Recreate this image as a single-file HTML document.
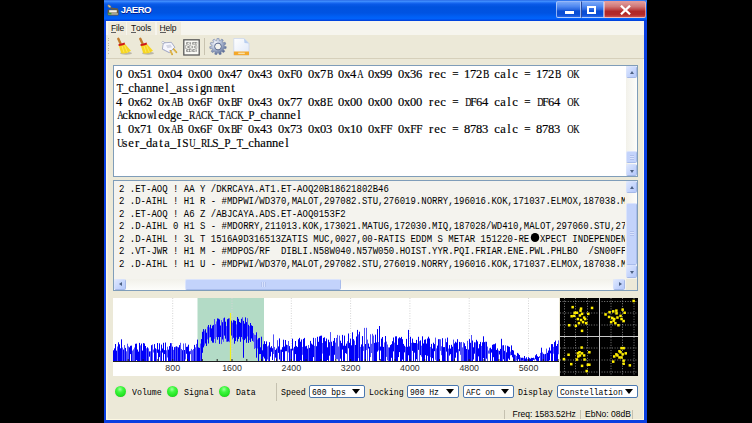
<!DOCTYPE html>
<html><head><meta charset="utf-8">
<style>
*{margin:0;padding:0;box-sizing:border-box}
html,body{width:752px;height:423px;overflow:hidden;background:#000}
body{position:relative;font-family:"Liberation Sans",sans-serif}
.a{position:absolute}
#win{left:104px;top:0;width:543px;height:423px;background:#0a3fe0;}
#title{left:0;top:0;width:543px;height:21px;
 background:linear-gradient(to bottom,#1a56dd 0,#4a98ff 1px,#2d7cfa 2px,#0a5ae8 4px,#0052de 7px,#0053e2 13px,#0060f6 17px,#0062fb 19px,#0046e4 20px,#0042da 21px);}
#client{left:2px;top:21px;width:538px;height:399px;background:#ece9d8;box-shadow:inset 1.5px 0 0 #fcf8e4,inset -1px 0 0 #fcf8e4,inset 0 -1px 0 #fcf8e4}
#ttl{left:16.8px;top:4px;color:#fff;font-weight:bold;font-size:9.6px;letter-spacing:-0.6px;text-shadow:0.5px 0.5px 0 #0a1f8a}
.tb{top:1px;height:17px;border:1px solid rgba(200,220,255,0.7);border-radius:2px;}
#menubar{left:0;top:0;width:538px;height:14px;background:#f6f5ee}
.mi{top:0.5px;height:13px;background:#efebdd;font-size:8.5px;color:#111;line-height:13px;padding-left:3px;letter-spacing:-0.15px}
.mi u{text-decoration:none;border-bottom:1px solid #606060;line-height:8px;display:inline-block}
#toolbar{left:0;top:14px;width:538px;height:24px;background:#ece9d8;border-bottom:1px solid #d6d0bb}
.box{border:1px solid #7f9db9;background:#fff;overflow:hidden}
.sg{font-family:"Liberation Serif",serif;white-space:pre;color:#000;-webkit-text-stroke:0.18px #000}
.sg i{font-style:normal;display:inline-block;width:6px;text-align:center}
.sg2 i{width:5.4px}
.sg b{font-weight:normal;display:inline-block;transform-origin:50% 50%}
.mono{font-family:"Liberation Mono",monospace;white-space:pre;color:#000;transform-origin:0 0}
.sbv{background:linear-gradient(to right,#f2f1ea,#fdfdfb)}
.sbtn{background:linear-gradient(135deg,#dce6fe,#b4c8fa);border:1px solid rgba(255,255,255,0.4);border-right-color:#a4b8e8;border-bottom-color:#a4b8e8;border-radius:2px}
.thumb{background:#c3d3fb;border:1px solid rgba(255,255,255,0.4);border-right-color:#a8bcec;border-bottom-color:#a8bcec;border-radius:2px}
.grip{position:absolute;background:repeating-linear-gradient(to bottom,#b0c0ec 0,#b0c0ec 1px,#d8e2fd 1px,#d8e2fd 2px)}
.griph{position:absolute;background:repeating-linear-gradient(to right,#b4c4ee 0,#b4c4ee 1px,#d8e2fd 1px,#d8e2fd 2px)}
.led{width:11.5px;height:11.5px;border-radius:50%;background:radial-gradient(circle at 45% 30%,#a0ffa0 0,#40f840 30%,#20e020 70%,#10a810 92%,#2a8a2a 100%);box-shadow:0 0 1px 0.5px rgba(255,190,220,0.6)}
.lbl{font-family:"Liberation Mono",monospace;font-size:9.6px;color:#000;white-space:pre;transform-origin:0 0;transform:scaleX(0.86)}
.combo{height:13px;border:1px solid #4a78b0;background:#fff;border-radius:2px}
.ctext{font-family:"Liberation Mono",monospace;font-size:9.2px;color:#000;white-space:pre;transform-origin:0 0;transform:scaleX(0.875);left:1.5px;top:1px;line-height:12px}
.arr{width:0;height:0;border-left:4.5px solid transparent;border-right:4.5px solid transparent;border-top:5px solid #000}
.st{font-size:8.5px;color:#000;white-space:pre}
.sep{width:1px;background:#c5c1b0}
</style></head><body>
<div id="win" class="a">
 <div id="title" class="a">
  <svg class="a" style="left:2.5px;top:4px" width="14" height="13" viewBox="0 0 14 13">
   <ellipse cx="2.4" cy="2.3" rx="1.9" ry="1.1" transform="rotate(40 2.4 2.3)" fill="#dccca0" stroke="#7a6840" stroke-width="0.5"/>
   <path d="M3.8 4.2 L11 5.2" stroke="#6a5a3a" stroke-width="1.4"/>
   <rect x="0.6" y="5.6" width="11" height="5.8" rx="1.2" fill="#6a5a38"/>
   <rect x="2.2" y="6.2" width="7.6" height="2.3" fill="#f0f0ea"/>
   <rect x="1.3" y="8.9" width="9.6" height="2" fill="#a4a494"/>
   <rect x="1.3" y="8.9" width="3.1" height="1.5" fill="#3c9c30"/>
  </svg>
  <div id="ttl" class="a">JAERO</div>
  <div class="a tb" style="left:452px;width:25px;border-radius:2px 0 0 2px;background:linear-gradient(to bottom,#7aa8f8 0,#4f88f0 30%,#2a68e0 50%,#0a4ed4 60%,#0a50d8 85%,#2a68e8 100%)">
   <div class="a" style="left:7.5px;top:8.5px;width:9.5px;height:3px;background:#fff"></div>
  </div>
  <div class="a tb" style="left:477px;width:23px;border-radius:0;border-left-color:#2a4aa0;background:linear-gradient(to bottom,#7aa8f8 0,#4f88f0 30%,#2a68e0 50%,#0a4ed4 60%,#0a50d8 85%,#2a68e8 100%)">
   <div class="a" style="left:5px;top:3.5px;width:9px;height:8.5px;border:2px solid #fff;border-top-width:2.5px"></div>
  </div>
  <div class="a tb" style="left:500px;width:42px;border-radius:0 2px 2px 0;border-left-color:#5a3a8a;border-color:rgba(255,220,220,0.55);background:linear-gradient(to bottom,#e09a9a 0,#d07878 30%,#c04848 50%,#b02828 62%,#b42a2a 85%,#c85050 100%)">
   <svg class="a" style="left:14.5px;top:3px" width="11" height="10" viewBox="0 0 11 10"><path d="M1.8 1.5 L9.2 8.5 M9.2 1.5 L1.8 8.5" stroke="#fff" stroke-width="2.3" stroke-linecap="square"/></svg>
  </div>
 </div>
 <div id="client" class="a">
  <div id="menubar" class="a">
   <div class="a mi" style="left:2px;width:18px"><u>F</u>ile</div>
   <div class="a mi" style="left:21px;width:28px;padding-left:4px"><u>T</u>ools</div>
   <div class="a mi" style="left:50.5px;width:24px"><u>H</u>elp</div>
  </div>
  <div id="toolbar" class="a">
   <!-- handle -->
   <div class="a" style="left:2px;top:3px;width:1px;height:16px;background:repeating-linear-gradient(to bottom,#b8b3a0 0,#b8b3a0 1px,transparent 1px,transparent 2.5px)"></div>
      <svg class="a" style="left:10px;top:2px" width="17" height="18" viewBox="0 0 17 18">
    <ellipse cx="10" cy="16.3" rx="6" ry="1.5" fill="#a8a498" opacity="0.75"/>
    <path d="M2.3 1.8 L4.6 6.8" stroke="#c27a2a" stroke-width="2.4" stroke-linecap="round"/>
    <path d="M2.6 8 L8.6 6.5 L15 13.8 Q11 17.2 5.2 16.3 Z" fill="#f6d622"/>
    <path d="M6 9 L8 15.5 M8.5 8.5 L11.5 15.5" stroke="#fff080" stroke-width="0.8" opacity="0.8"/>
    <path d="M2.4 7.2 Q5.5 6.6 8.6 5.6 L9 7.4 Q6 8.4 2.8 9 Z" fill="#d01818"/>
   </svg>
   <svg class="a" style="left:32px;top:2px" width="17" height="18" viewBox="0 0 17 18">
    <ellipse cx="10" cy="16.3" rx="6" ry="1.5" fill="#a8a498" opacity="0.75"/>
    <path d="M2.3 1.8 L4.6 6.8" stroke="#c27a2a" stroke-width="2.4" stroke-linecap="round"/>
    <path d="M2.6 8 L8.6 6.5 L15 13.8 Q11 17.2 5.2 16.3 Z" fill="#f6d622"/>
    <path d="M6 9 L8 15.5 M8.5 8.5 L11.5 15.5" stroke="#fff080" stroke-width="0.8" opacity="0.8"/>
    <path d="M2.4 7.2 Q5.5 6.6 8.6 5.6 L9 7.4 Q6 8.4 2.8 9 Z" fill="#d01818"/>
   </svg>
   <svg class="a" style="left:55px;top:4.5px" width="18" height="17" viewBox="0 0 18 17">
    <path d="M0.9 2 L4 3.4" stroke="#9098b0" stroke-width="2"/>
    <path d="M0.9 2 L4 3.4" stroke="#fafaff" stroke-width="1.1"/>
    <path d="M2 4.8 L3.4 2.8 L10.3 2.3 L13.8 7.2 L8.3 12.7 L1.4 9.2 Z" fill="#f6f6fe" stroke="#8a92b4" stroke-width="0.7"/>
    <path d="M1.6 8.8 L8.3 12.2 L13.3 7.4 L13.8 7.2 L8.3 12.7 L1.4 9.2 Z" fill="#a8acc8"/>
    <path d="M5 5.2 L9.5 4.6 L11 7.2 L6.5 8.2 Z" fill="#d4d6e4"/>
    <path d="M9.4 10.8 L11.2 14.3 M12.8 9.2 L15.4 12.3" stroke="#d0a028" stroke-width="1.7" stroke-linecap="round"/>
    <path d="M9.4 10.8 L11.2 14.3 M12.8 9.2 L15.4 12.3" stroke="#f4d070" stroke-width="0.6"/>
   </svg>
   <svg class="a" style="left:77px;top:3.5px" width="17" height="17" viewBox="0 0 17 17">
    <rect x="0.8" y="0.8" width="15.4" height="15.2" fill="#fbfbf6" stroke="#5a5a5a" stroke-width="1.3"/>
    <g fill="#505050" opacity="0.8"><rect x="3.10" y="3.20" width="0.7" height="2.4"/><rect x="4.65" y="3.20" width="1.5" height="2.4" fill="none" stroke="#505050" stroke-width="0.45"/><rect x="7.00" y="3.20" width="0.7" height="2.4"/><rect x="8.95" y="3.20" width="0.7" height="2.4"/><rect x="10.50" y="3.20" width="1.5" height="2.4" fill="none" stroke="#505050" stroke-width="0.45"/><rect x="12.45" y="3.20" width="1.5" height="2.4" fill="none" stroke="#505050" stroke-width="0.45"/><rect x="2.70" y="6.80" width="1.5" height="2.4" fill="none" stroke="#505050" stroke-width="0.45"/><rect x="5.05" y="6.80" width="0.7" height="2.4"/><rect x="6.60" y="6.80" width="1.5" height="2.4" fill="none" stroke="#505050" stroke-width="0.45"/><rect x="8.95" y="6.80" width="0.7" height="2.4"/><rect x="10.90" y="6.80" width="0.7" height="2.4"/><rect x="12.45" y="6.80" width="1.5" height="2.4" fill="none" stroke="#505050" stroke-width="0.45"/><rect x="3.10" y="10.40" width="0.7" height="2.4"/><rect x="4.65" y="10.40" width="1.5" height="2.4" fill="none" stroke="#505050" stroke-width="0.45"/><rect x="6.60" y="10.40" width="1.5" height="2.4" fill="none" stroke="#505050" stroke-width="0.45"/><rect x="8.95" y="10.40" width="0.7" height="2.4"/><rect x="10.50" y="10.40" width="1.5" height="2.4" fill="none" stroke="#505050" stroke-width="0.45"/><rect x="12.85" y="10.40" width="0.7" height="2.4"/></g>
   </svg>
   <div class="a" style="left:98px;top:3px;width:1px;height:17px;background:#c8c3b0"></div>
   <svg class="a" style="left:103px;top:3px" width="18" height="17" viewBox="0 0 18 17">
    <defs><radialGradient id="gg" cx="35%" cy="30%" r="75%"><stop offset="0" stop-color="#f4f6fb"/><stop offset="0.45" stop-color="#b4c0d8"/><stop offset="1" stop-color="#53658f"/></radialGradient></defs>
    <path d="M7.57 2.67 L8.05 0.25 L9.95 0.25 L10.43 2.67 L10.95 2.83 L12.66 1.05 L14.25 2.07 L13.35 4.37 L13.71 4.78 L16.11 4.21 L16.89 5.94 L14.89 7.38 L14.97 7.92 L17.30 8.74 L17.03 10.61 L14.57 10.74 L14.34 11.24 L15.85 13.18 L14.61 14.61 L12.47 13.39 L12.01 13.69 L12.23 16.15 L10.42 16.68 L9.27 14.49 L8.73 14.49 L7.58 16.68 L5.77 16.15 L5.99 13.69 L5.53 13.39 L3.39 14.61 L2.15 13.18 L3.66 11.24 L3.43 10.74 L0.97 10.61 L0.70 8.74 L3.03 7.92 L3.11 7.38 L1.11 5.94 L1.89 4.21 L4.29 4.78 L4.65 4.37 L3.75 2.07 L5.34 1.05 L7.05 2.83 Z" fill="url(#gg)" stroke="#6878a0" stroke-width="0.5"/>
    <circle cx="9" cy="8.5" r="3.4" fill="#f2f2ee" stroke="#5a6a90" stroke-width="1"/>
   </svg>
   <svg class="a" style="left:126.5px;top:3px" width="17" height="18" viewBox="0 0 17 18">
    <defs><linearGradient id="dg" x1="0" y1="0" x2="1" y2="1"><stop offset="0" stop-color="#ffffff"/><stop offset="1" stop-color="#dfe8f8"/></linearGradient></defs>
    <path d="M0.8 0.5 L11 0.5 L16 5.5 L16 17 L0.8 17 Z" fill="url(#dg)" stroke="#c8d4ec" stroke-width="0.7"/>
    <path d="M11 0.5 L11.5 5 L16 5.5 Z" fill="#b8cef0"/>
    <rect x="0.8" y="13.5" width="15.2" height="3.7" fill="#f4a82a"/>
    <rect x="5.2" y="14.6" width="6.6" height="1.5" fill="#fbe0a8"/>
   </svg>
  </div>
  <!-- Box 1 -->
  <div class="a box" style="left:7px;top:44px;width:525px;height:112px">
   <div class="a sg" style="left:2px;top:2px;font-size:12.5px;line-height:13.75px"><i>0</i><i> </i><i>0</i><i>x</i><i>5</i><i>1</i><i> </i><i>0</i><i>x</i><i>0</i><i>4</i><i> </i><i>0</i><i>x</i><i>0</i><i>0</i><i> </i><i>0</i><i>x</i><i>4</i><i>7</i><i> </i><i>0</i><i>x</i><i>4</i><i>3</i><i> </i><i>0</i><i>x</i><i><b style="transform:scaleX(0.906)">F</b></i><i>0</i><i> </i><i>0</i><i>x</i><i>7</i><i><b style="transform:scaleX(0.756)">B</b></i><i> </i><i>0</i><i>x</i><i>4</i><i><b style="transform:scaleX(0.698)">A</b></i><i> </i><i>0</i><i>x</i><i>9</i><i>9</i><i> </i><i>0</i><i>x</i><i>3</i><i>6</i><i> </i><i>r</i><i>e</i><i>c</i><i> </i><i><b style="transform:scaleX(0.894)">=</b></i><i> </i><i>1</i><i>7</i><i>2</i><i><b style="transform:scaleX(0.756)">B</b></i><i> </i><i>c</i><i>a</i><i>l</i><i>c</i><i> </i><i><b style="transform:scaleX(0.894)">=</b></i><i> </i><i>1</i><i>7</i><i>2</i><i><b style="transform:scaleX(0.756)">B</b></i><i> </i><i><b style="transform:scaleX(0.698)">O</b></i><i><b style="transform:scaleX(0.698)">K</b></i>
<i><b style="transform:scaleX(0.825)">T</b></i><i>_</i><i>c</i><i>h</i><i>a</i><i>n</i><i>n</i><i>e</i><i>l</i><i>_</i><i>a</i><i>s</i><i>s</i><i>i</i><i>g</i><i>n</i><i><b style="transform:scaleX(0.648)">m</b></i><i>e</i><i>n</i><i>t</i>
<i>4</i><i> </i><i>0</i><i>x</i><i>6</i><i>2</i><i> </i><i>0</i><i>x</i><i><b style="transform:scaleX(0.698)">A</b></i><i><b style="transform:scaleX(0.756)">B</b></i><i> </i><i>0</i><i>x</i><i>6</i><i><b style="transform:scaleX(0.906)">F</b></i><i> </i><i>0</i><i>x</i><i><b style="transform:scaleX(0.756)">B</b></i><i><b style="transform:scaleX(0.906)">F</b></i><i> </i><i>0</i><i>x</i><i>4</i><i>3</i><i> </i><i>0</i><i>x</i><i>7</i><i>7</i><i> </i><i>0</i><i>x</i><i>8</i><i><b style="transform:scaleX(0.825)">E</b></i><i> </i><i>0</i><i>x</i><i>0</i><i>0</i><i> </i><i>0</i><i>x</i><i>0</i><i>0</i><i> </i><i>0</i><i>x</i><i>0</i><i>0</i><i> </i><i>r</i><i>e</i><i>c</i><i> </i><i><b style="transform:scaleX(0.894)">=</b></i><i> </i><i><b style="transform:scaleX(0.698)">D</b></i><i><b style="transform:scaleX(0.906)">F</b></i><i>6</i><i>4</i><i> </i><i>c</i><i>a</i><i>l</i><i>c</i><i> </i><i><b style="transform:scaleX(0.894)">=</b></i><i> </i><i><b style="transform:scaleX(0.698)">D</b></i><i><b style="transform:scaleX(0.906)">F</b></i><i>6</i><i>4</i><i> </i><i><b style="transform:scaleX(0.698)">O</b></i><i><b style="transform:scaleX(0.698)">K</b></i>
<i><b style="transform:scaleX(0.698)">A</b></i><i>c</i><i>k</i><i>n</i><i>o</i><i><b style="transform:scaleX(0.698)">w</b></i><i>l</i><i>e</i><i>d</i><i>g</i><i>e</i><i>_</i><i><b style="transform:scaleX(0.756)">R</b></i><i><b style="transform:scaleX(0.698)">A</b></i><i><b style="transform:scaleX(0.756)">C</b></i><i><b style="transform:scaleX(0.698)">K</b></i><i>_</i><i><b style="transform:scaleX(0.825)">T</b></i><i><b style="transform:scaleX(0.698)">A</b></i><i><b style="transform:scaleX(0.756)">C</b></i><i><b style="transform:scaleX(0.698)">K</b></i><i>_</i><i><b style="transform:scaleX(0.906)">P</b></i><i>_</i><i>c</i><i>h</i><i>a</i><i>n</i><i>n</i><i>e</i><i>l</i>
<i>1</i><i> </i><i>0</i><i>x</i><i>7</i><i>1</i><i> </i><i>0</i><i>x</i><i><b style="transform:scaleX(0.698)">A</b></i><i><b style="transform:scaleX(0.756)">B</b></i><i> </i><i>0</i><i>x</i><i>6</i><i><b style="transform:scaleX(0.906)">F</b></i><i> </i><i>0</i><i>x</i><i><b style="transform:scaleX(0.756)">B</b></i><i><b style="transform:scaleX(0.906)">F</b></i><i> </i><i>0</i><i>x</i><i>4</i><i>3</i><i> </i><i>0</i><i>x</i><i>7</i><i>3</i><i> </i><i>0</i><i>x</i><i>0</i><i>3</i><i> </i><i>0</i><i>x</i><i>1</i><i>0</i><i> </i><i>0</i><i>x</i><i><b style="transform:scaleX(0.906)">F</b></i><i><b style="transform:scaleX(0.906)">F</b></i><i> </i><i>0</i><i>x</i><i><b style="transform:scaleX(0.906)">F</b></i><i><b style="transform:scaleX(0.906)">F</b></i><i> </i><i>r</i><i>e</i><i>c</i><i> </i><i><b style="transform:scaleX(0.894)">=</b></i><i> </i><i>8</i><i>7</i><i>8</i><i>3</i><i> </i><i>c</i><i>a</i><i>l</i><i>c</i><i> </i><i><b style="transform:scaleX(0.894)">=</b></i><i> </i><i>8</i><i>7</i><i>8</i><i>3</i><i> </i><i><b style="transform:scaleX(0.698)">O</b></i><i><b style="transform:scaleX(0.698)">K</b></i>
<i><b style="transform:scaleX(0.698)">U</b></i><i>s</i><i>e</i><i>r</i><i>_</i><i>d</i><i>a</i><i>t</i><i>a</i><i>_</i><i>I</i><i><b style="transform:scaleX(0.906)">S</b></i><i><b style="transform:scaleX(0.698)">U</b></i><i>_</i><i><b style="transform:scaleX(0.756)">R</b></i><i><b style="transform:scaleX(0.825)">L</b></i><i><b style="transform:scaleX(0.906)">S</b></i><i>_</i><i><b style="transform:scaleX(0.906)">P</b></i><i>_</i><i><b style="transform:scaleX(0.825)">T</b></i><i>_</i><i>c</i><i>h</i><i>a</i><i>n</i><i>n</i><i>e</i><i>l</i></div>
   <div class="a sbv" style="left:512px;top:0;width:11px;height:110px"></div>
   <div class="a sbtn" style="left:512px;top:0;width:11px;height:12px"><div class="a" style="left:2.5px;top:3.5px;width:0;height:0;border-left:2.5px solid transparent;border-right:2.5px solid transparent;border-bottom:3px solid #4d6185"></div></div>
   <div class="a thumb" style="left:512px;top:85px;width:11px;height:12px"><div class="grip" style="left:2.5px;top:3px;width:4.5px;height:5px"></div></div>
   <div class="a sbtn" style="left:512px;top:98px;width:11px;height:12px"><div class="a" style="left:2.5px;top:4.5px;width:0;height:0;border-left:2.5px solid transparent;border-right:2.5px solid transparent;border-top:3px solid #4d6185"></div></div>
  </div>
  <!-- Box 2 -->
  <div class="a box" style="left:7px;top:159px;width:525px;height:111px;background:#f4f3ee">
   <div class="a" style="left:0;top:0;width:511px;height:97px;overflow:hidden">
   <div class="a mono" style="left:5px;top:1.5px;font-size:10.6px;line-height:12.5px;transform:scaleX(0.849)">2 .ET-AOQ ! AA Y /DKRCAYA.AT1.ET-AOQ20B18621802B46
2 .D-AIHL ! H1 R - #MDPWI/WD370,MALOT,297082.STU,276019.NORRY,196016.KOK,171037.ELMOX,187038.MALOT,297082
2 .ET-AOQ ! A6 Z /ABJCAYA.ADS.ET-AOQ0153F2
2 .D-AIHL 0 H1 S - #MDORRY,211013.KOK,173021.MATUG,172030.MIQ,187028/WD410,MALOT,297060.STU,276019
2 .D-AIHL ! 3L T 1516A9D316513ZATIS MUC,0027,00-RATIS EDDM S METAR 151220-RE<span style="display:inline-block;width:12.7px;height:8px;position:relative"><span style="position:absolute;left:1.5px;top:-0.5px;width:10px;height:9px;border-radius:50%;background:#000"></span></span>XPECT INDEPENDENT
2 .VT-JWR ! H1 M - #MDPOS/RF  DIBLI.N58W040.N57W050.HOIST.YYR.PQI.FRIAR.ENE.PWL.PHLBO  /SN00FF
2 .D-AIHL ! H1 U - #MDPWI/WD370,MALOT,297082.STU,276019.NORRY,196016.KOK,171037.ELMOX,187038.MALOT,297082</div>
   </div>
   <div class="a sbv" style="left:512px;top:0;width:11px;height:97px"></div>
   <div class="a sbtn" style="left:512px;top:0;width:11px;height:12px"><div class="a" style="left:2.5px;top:3.5px;width:0;height:0;border-left:2.5px solid transparent;border-right:2.5px solid transparent;border-bottom:3px solid #4d6185"></div></div>
   <div class="a thumb" style="left:512px;top:22px;width:11px;height:62px"><div class="grip" style="left:2.5px;top:27px;width:4.5px;height:5px"></div></div>
   <div class="a sbtn" style="left:512px;top:84px;width:11px;height:13px"><div class="a" style="left:2.5px;top:5px;width:0;height:0;border-left:2.5px solid transparent;border-right:2.5px solid transparent;border-top:3px solid #4d6185"></div></div>
   <div class="a" style="left:0;top:97.5px;width:511px;height:11.5px;background:linear-gradient(to bottom,#f2f1ea,#fdfdfb)"></div>
   <div class="a sbtn" style="left:0;top:97.5px;width:12px;height:11px"><div class="a" style="left:3.5px;top:2.5px;width:0;height:0;border-top:2.5px solid transparent;border-bottom:2.5px solid transparent;border-right:3px solid #4d6185"></div></div>
   <div class="a thumb" style="left:71px;top:97.5px;width:156px;height:11px"><div class="griph" style="left:75px;top:2.5px;width:5px;height:4.5px"></div></div>
   <div class="a sbtn" style="left:499px;top:97.5px;width:12px;height:11px"><div class="a" style="left:4.5px;top:2.5px;width:0;height:0;border-top:2.5px solid transparent;border-bottom:2.5px solid transparent;border-left:3px solid #4d6185"></div></div>
   <div class="a" style="left:512px;top:97.5px;width:11px;height:11.5px;background:#ece9d8"></div>
  </div>
  <!-- spectrum -->
  <svg class="a" style="left:7px;top:277px" width="446" height="78" viewBox="113 298 446 78">
   <rect x="113" y="298" width="446" height="78" fill="#fff"/>
   <rect x="197.5" y="298" width="66.5" height="63" fill="#b3dbc6"/>
   <g stroke="#d4d4d4" stroke-width="1" stroke-dasharray="1,1.5"><line x1="172.7" y1="298" x2="172.7" y2="361"/><line x1="232.0" y1="298" x2="232.0" y2="361"/><line x1="291.3" y1="298" x2="291.3" y2="361"/><line x1="350.6" y1="298" x2="350.6" y2="361"/><line x1="409.9" y1="298" x2="409.9" y2="361"/><line x1="469.2" y1="298" x2="469.2" y2="361"/><line x1="528.5" y1="298" x2="528.5" y2="361"/></g>
   <path d="M113.5 350.3V361.5M114.5 348.4V361.5M115.5 344.0V361.5M116.5 350.6V361.5M118.5 342.3V361.5M119.5 344.3V361.5M120.5 348.3V361.5M121.5 339.3V361.5M123.5 349.5V361.5M125.5 347.9V361.5M129.5 347.3V361.5M130.5 345.8V354.1M131.5 345.6V361.5M135.5 343.8V361.5M136.5 343.6V360.1M137.5 349.5V361.5M138.5 351.6V361.5M139.5 342.9V361.5M141.5 343.6V361.5M142.5 350.6V361.5M143.5 343.1V361.5M144.5 343.5V361.5M145.5 346.0V361.5M147.5 347.3V361.5M149.5 351.4V356.7M151.5 345.2V361.5M154.5 344.1V361.5M155.5 348.3V361.5M157.5 343.0V352.8M158.5 349.5V361.5M159.5 343.3V357.1M161.5 344.6V361.5M162.5 348.5V352.6M163.5 342.8V361.5M164.5 350.1V354.1M165.5 342.5V361.5M168.5 349.6V361.5M169.5 346.1V361.5M170.5 343.1V361.5M172.5 346.6V361.5M174.5 347.1V361.5M176.5 346.3V361.5M178.5 347.4V361.5M179.5 345.1V361.5M182.5 350.2V361.5M184.5 350.0V361.5M186.5 346.9V353.8M187.5 346.6V361.5M188.5 344.7V361.5M189.5 351.3V361.5M194.5 344.9V361.5M197.5 339.6V361.5M198.5 347.4V361.5M199.5 347.9V361.5M201.5 339.1V361.5M202.5 331.8V352.8M203.5 329.1V347.4M205.5 329.2V343.5M206.5 332.7V346.0M208.5 325.0V343.5M210.5 324.8V337.2M211.5 328.4V340.8M212.5 325.6V342.6M213.5 324.9V342.7M217.5 318.4V339.7M218.5 318.7V337.1M219.5 319.4V343.9M220.5 325.5V337.0M222.5 322.2V339.5M224.5 317.6V335.6M225.5 321.7V338.7M227.5 319.2V341.7M228.5 318.5V341.4M231.5 320.7V335.6M233.5 320.2V337.8M234.5 320.5V343.7M235.5 321.0V341.0M237.5 317.0V341.5M238.5 318.8V338.9M239.5 322.0V336.8M240.5 322.8V341.8M241.5 318.8V337.1M243.5 320.9V357.8M244.5 323.6V340.1M245.5 317.4V338.6M246.5 322.1V342.8M248.5 324.8V342.9M250.5 323.0V341.9M251.5 325.3V338.5M252.5 326.0V340.9M256.5 332.3V357.7M258.5 338.3V361.5M259.5 337.9V354.1M260.5 347.3V354.0M261.5 336.7V361.5M262.5 350.3V361.5M263.5 344.2V356.7M264.5 341.2V358.5M265.5 344.0V361.5M266.5 341.4V361.5M269.5 342.2V361.5M270.5 347.5V356.5M271.5 346.2V351.8M272.5 348.2V360.0M275.5 349.9V357.6M276.5 348.5V361.5M278.5 346.4V352.9M279.5 338.4V359.5M281.5 349.6V361.5M282.5 347.2V351.9M283.5 339.7V361.5M284.5 346.5V361.5M285.5 340.0V351.3M286.5 344.7V351.2M289.5 346.1V361.5M291.5 348.9V361.5M292.5 338.7V350.5M294.5 346.8V361.5M295.5 341.0V354.1M296.5 346.1V361.5M297.5 347.1V361.5M298.5 339.3V361.5M299.5 337.9V361.5M300.5 341.7V360.3M301.5 339.5V361.0M303.5 338.9V361.5M304.5 337.9V361.5M305.5 346.3V361.5M306.5 345.8V361.5M307.5 348.6V361.5M309.5 347.9V361.5M310.5 340.9V361.5M311.5 343.6V361.5M312.5 344.6V361.5M313.5 337.8V357.1M316.5 346.2V361.5M317.5 336.8V361.5M318.5 341.8V361.5M319.5 336.4V361.5M320.5 335.8V361.5M321.5 335.6V361.5M323.5 337.9V361.5M324.5 337.3V361.5M325.5 341.2V361.5M326.5 338.5V361.0M327.5 347.3V360.0M328.5 339.7V361.5M329.5 342.2V355.7M331.5 341.7V361.5M332.5 345.9V361.5M333.5 340.9V361.5M334.5 338.0V354.8M340.5 340.7V358.7M341.5 343.1V361.5M342.5 334.9V349.6M343.5 345.7V361.5M344.5 335.6V361.5M345.5 345.8V353.1M346.5 343.6V353.8M348.5 333.5V348.3M349.5 342.8V361.5M350.5 338.7V361.5M351.5 345.3V361.5M352.5 332.3V361.5M353.5 339.2V361.5M355.5 345.0V361.5M356.5 336.5V361.5M357.5 329.9V361.5M359.5 331.7V361.5M361.5 344.4V361.5M362.5 336.1V361.5M365.5 344.0V361.5M368.5 343.5V348.5M369.5 346.8V361.5M374.5 342.9V361.5M375.5 334.6V361.5M376.5 342.4V361.5M377.5 329.1V351.6M379.5 326.0V360.1M380.5 346.6V350.6M381.5 338.6V361.5M382.5 337.0V361.5M383.5 346.9V361.5M385.5 336.0V361.5M389.5 347.4V361.5M390.5 345.1V361.5M391.5 344.2V357.8M392.5 341.2V361.5M393.5 337.5V351.4M395.5 336.4V361.5M396.5 336.3V361.5M397.5 344.9V361.5M398.5 338.4V357.1M399.5 337.3V352.1M400.5 338.2V361.5M401.5 336.9V361.5M402.5 339.2V359.6M403.5 343.9V361.5M404.5 345.7V352.4M406.5 338.9V361.5M407.5 346.8V361.5M408.5 329.9V355.3M409.5 346.4V361.5M410.5 336.8V361.5M412.5 338.6V350.9M413.5 342.6V361.5M414.5 343.0V352.7M415.5 343.0V361.5M416.5 339.9V359.2M418.5 336.8V349.9M420.5 340.4V355.1M422.5 336.3V361.5M423.5 343.4V361.5M424.5 339.8V361.5M425.5 339.3V355.1M426.5 343.6V361.5M427.5 338.5V355.8M428.5 336.7V361.5M429.5 338.5V361.5M431.5 343.9V361.5M432.5 348.5V358.1M433.5 342.7V361.5M434.5 344.1V351.2M437.5 345.6V361.5M438.5 339.2V361.5M442.5 338.2V361.5M443.5 347.1V361.5M444.5 347.1V361.5M446.5 342.2V351.6M447.5 337.6V361.5M449.5 345.1V355.6M450.5 348.6V354.2M451.5 344.8V361.5M452.5 346.7V361.5M454.5 343.4V361.5M455.5 341.7V357.7M456.5 342.6V352.6M457.5 339.2V361.5M459.5 341.9V351.2M464.5 343.3V361.5M465.5 346.1V361.5M466.5 349.0V361.5M468.5 349.5V361.5M469.5 339.1V361.5M470.5 342.8V361.5M472.5 340.5V361.5M473.5 347.3V359.5M474.5 342.3V353.7M476.5 339.8V361.4M477.5 341.4V361.5M478.5 348.3V356.4M479.5 344.1V361.5M480.5 341.9V361.5M482.5 342.3V361.5M483.5 336.3V358.1M484.5 342.1V361.5M486.5 341.8V358.7M490.5 347.7V361.5M491.5 349.2V352.6M492.5 344.8V361.5M493.5 344.3V357.2M494.5 344.2V361.5M495.5 343.4V361.5M496.5 349.9V361.5M497.5 348.4V361.5M499.5 350.9V354.5M500.5 348.9V361.5M501.5 338.8V361.5M503.5 345.2V359.3M504.5 350.8V361.5M506.5 352.3V361.5M507.5 345.8V361.5M508.5 346.4V358.6M509.5 346.9V359.9M511.5 345.4V355.1M512.5 350.0V357.3M513.5 350.5V361.5M514.5 354.6V361.5M517.5 352.9V361.5M518.5 353.7V359.2M519.5 355.0V361.5M521.5 357.8V360.8M522.5 357.7V360.7M524.5 356.0V361.5M525.5 358.5V361.5M526.5 357.3V361.3M528.5 357.2V361.5M529.5 358.2V361.5M530.5 358.7V361.5M531.5 357.8V361.1M532.5 358.0V361.5M533.5 357.7V359.9M535.5 355.3V359.2M536.5 354.2V360.7M537.5 356.2V361.5M538.5 357.0V361.5M541.5 347.7V361.5M543.5 353.8V361.5M545.5 353.9V361.5M547.5 352.8V361.5M548.5 350.5V361.5M549.5 347.5V360.3M550.5 350.6V353.4M551.5 344.1V361.5M552.5 344.1V361.5M554.5 342.1V361.5M555.5 340.6V361.5M556.5 346.0V361.5M557.5 344.0V361.5" fill="none" stroke="#0000f8" stroke-width="1"/><path d="M117.5 346.5V361.5M122.5 347.6V361.5M124.5 345.1V361.5M126.5 351.3V361.5M127.5 343.7V361.5M128.5 346.4V361.5M132.5 350.6V361.5M133.5 349.4V361.5M134.5 347.5V361.5M140.5 345.4V361.5M146.5 348.3V361.5M148.5 348.4V361.5M150.5 351.3V361.5M152.5 344.5V361.5M153.5 349.5V352.5M156.5 349.2V361.5M160.5 350.7V361.5M166.5 350.3V361.5M167.5 346.7V357.5M171.5 343.2V361.5M173.5 349.8V361.5M175.5 346.7V361.5M177.5 346.8V361.5M180.5 342.8V361.5M181.5 349.0V361.5M183.5 343.5V361.5M185.5 343.3V359.5M190.5 350.8V354.2M191.5 348.9V361.5M192.5 350.2V361.5M193.5 349.0V361.5M195.5 347.4V361.5M196.5 343.9V361.5M200.5 343.6V361.5M204.5 330.6V345.6M207.5 326.6V339.4M209.5 327.4V337.5M214.5 319.0V338.9M215.5 324.2V343.1M216.5 321.4V337.1M221.5 320.2V344.1M223.5 318.3V341.8M226.5 326.1V341.8M229.5 318.2V342.2M230.5 322.7V339.9M232.5 322.6V339.3M236.5 324.4V337.4M242.5 317.3V339.4M247.5 318.2V336.5M249.5 326.1V340.2M253.5 333.2V341.8M254.5 334.7V349.0M255.5 335.1V348.1M257.5 339.5V348.5M267.5 346.4V359.5M268.5 345.5V361.5M273.5 334.4V354.0M274.5 346.9V361.5M277.5 340.2V361.5M280.5 349.7V361.5M287.5 345.1V361.5M288.5 341.0V352.5M290.5 348.8V361.5M293.5 348.4V361.5M302.5 346.9V354.8M308.5 345.0V361.5M314.5 345.8V361.5M315.5 338.1V361.5M322.5 343.0V353.6M330.5 332.1V361.5M335.5 342.6V359.7M336.5 337.9V359.0M337.5 334.9V359.3M338.5 346.5V361.5M339.5 335.6V361.5M347.5 341.2V361.5M354.5 340.6V361.5M358.5 334.4V358.1M360.5 346.9V361.5M363.5 346.4V350.9M364.5 327.9V361.5M366.5 327.8V350.1M367.5 339.6V361.5M370.5 334.3V357.1M371.5 343.8V353.0M372.5 333.8V361.5M373.5 335.5V361.5M378.5 342.1V350.4M384.5 342.4V361.5M386.5 341.6V356.9M387.5 344.5V360.3M388.5 347.4V361.5M394.5 342.6V361.5M405.5 346.8V361.5M411.5 342.9V361.5M417.5 343.5V361.5M419.5 341.2V361.5M421.5 345.7V356.7M430.5 346.9V357.2M435.5 337.6V359.8M436.5 348.4V361.5M439.5 339.1V361.5M440.5 339.3V350.8M441.5 346.3V355.2M445.5 338.6V361.5M448.5 348.6V361.5M453.5 339.6V361.5M458.5 349.2V361.5M460.5 342.4V354.8M461.5 342.0V361.5M462.5 347.4V361.5M463.5 342.2V361.5M467.5 340.8V361.5M471.5 335.0V361.5M475.5 342.4V361.5M481.5 345.9V361.5M485.5 341.7V361.5M487.5 346.6V361.5M488.5 350.5V353.6M489.5 348.3V353.7M498.5 350.4V361.5M502.5 345.4V361.5M505.5 345.3V361.5M510.5 351.6V355.4M515.5 354.9V361.4M516.5 356.0V360.5M520.5 357.4V361.5M523.5 357.9V361.2M527.5 359.0V361.0M534.5 358.4V360.5M539.5 356.1V358.0M540.5 352.9V361.5M542.5 352.4V361.5M544.5 354.3V361.5M546.5 348.6V361.5M553.5 346.8V353.7M558.5 340.4V354.3" fill="none" stroke="#5050f8" stroke-width="1"/>
   <line x1="230.5" y1="313" x2="230.5" y2="361" stroke="#f0f020" stroke-width="1.2"/>
   <line x1="113" y1="361.5" x2="559" y2="361.5" stroke="#202020" stroke-width="1"/>
   <g stroke="#202020" stroke-width="1"><line x1="128.2" y1="359" x2="128.2" y2="361"/><line x1="143.1" y1="359" x2="143.1" y2="361"/><line x1="157.9" y1="359" x2="157.9" y2="361"/><line x1="172.7" y1="359" x2="172.7" y2="361"/><line x1="187.5" y1="359" x2="187.5" y2="361"/><line x1="202.3" y1="359" x2="202.3" y2="361"/><line x1="217.2" y1="359" x2="217.2" y2="361"/><line x1="232.0" y1="359" x2="232.0" y2="361"/><line x1="246.8" y1="359" x2="246.8" y2="361"/><line x1="261.6" y1="359" x2="261.6" y2="361"/><line x1="276.5" y1="359" x2="276.5" y2="361"/><line x1="291.3" y1="359" x2="291.3" y2="361"/><line x1="306.1" y1="359" x2="306.1" y2="361"/><line x1="320.9" y1="359" x2="320.9" y2="361"/><line x1="335.8" y1="359" x2="335.8" y2="361"/><line x1="350.6" y1="359" x2="350.6" y2="361"/><line x1="365.4" y1="359" x2="365.4" y2="361"/><line x1="380.2" y1="359" x2="380.2" y2="361"/><line x1="395.1" y1="359" x2="395.1" y2="361"/><line x1="409.9" y1="359" x2="409.9" y2="361"/><line x1="424.7" y1="359" x2="424.7" y2="361"/><line x1="439.5" y1="359" x2="439.5" y2="361"/><line x1="454.4" y1="359" x2="454.4" y2="361"/><line x1="469.2" y1="359" x2="469.2" y2="361"/><line x1="484.0" y1="359" x2="484.0" y2="361"/><line x1="498.9" y1="359" x2="498.9" y2="361"/><line x1="513.7" y1="359" x2="513.7" y2="361"/><line x1="528.5" y1="359" x2="528.5" y2="361"/><line x1="543.3" y1="359" x2="543.3" y2="361"/><line x1="558.1" y1="359" x2="558.1" y2="361"/></g>
   <g font-family="Liberation Sans" font-size="8.8" fill="#303030" text-anchor="middle"><text x="172.7" y="370.9">800</text><text x="232.0" y="370.9">1600</text><text x="291.3" y="370.9">2400</text><text x="350.6" y="370.9">3200</text><text x="409.9" y="370.9">4000</text><text x="469.2" y="370.9">4800</text><text x="528.5" y="370.9">5600</text></g>
  </svg>
  <!-- constellation -->
  <svg class="a" style="left:454px;top:277px" width="78" height="78" viewBox="0 0 78 78">
   <rect width="78" height="78" fill="#000"/>
   <g stroke="#a0a0a0" stroke-width="0.8" stroke-dasharray="1,1.6"><line x1="4.5" y1="0" x2="4.5" y2="78"/><line x1="15.5" y1="0" x2="15.5" y2="78"/><line x1="27.5" y1="0" x2="27.5" y2="78"/><line x1="51.0" y1="0" x2="51.0" y2="78"/><line x1="62.5" y1="0" x2="62.5" y2="78"/><line x1="74.0" y1="0" x2="74.0" y2="78"/><line x1="0" y1="3.5" x2="78" y2="3.5"/><line x1="0" y1="15.0" x2="78" y2="15.0"/><line x1="0" y1="27.0" x2="78" y2="27.0"/><line x1="0" y1="50.0" x2="78" y2="50.0"/><line x1="0" y1="62.0" x2="78" y2="62.0"/><line x1="0" y1="74.0" x2="78" y2="74.0"/></g>
   <line x1="39.5" y1="0" x2="39.5" y2="78" stroke="#c8c8c8" stroke-width="1"/>
   <line x1="0" y1="38.5" x2="78" y2="38.5" stroke="#c8c8c8" stroke-width="1"/>
   <g fill="#ffee00"><rect x="11.4" y="7.9" width="2.5" height="2.5"/><rect x="19.8" y="9.4" width="2.5" height="2.5"/><rect x="30.8" y="8.7" width="2.5" height="2.5"/><rect x="13.5" y="13.5" width="2.5" height="2.5"/><rect x="15.6" y="13.5" width="2.5" height="2.5"/><rect x="18.7" y="16.2" width="2.5" height="2.5"/><rect x="20.8" y="14.6" width="2.5" height="2.5"/><rect x="27.0" y="14.6" width="2.5" height="2.5"/><rect x="10.4" y="17.0" width="2.5" height="2.5"/><rect x="22.9" y="18.3" width="2.5" height="2.5"/><rect x="16.6" y="19.8" width="2.5" height="2.5"/><rect x="19.8" y="20.8" width="2.5" height="2.5"/><rect x="23.9" y="19.8" width="2.5" height="2.5"/><rect x="17.7" y="23.9" width="2.5" height="2.5"/><rect x="21.8" y="22.9" width="2.5" height="2.5"/><rect x="25.0" y="23.9" width="2.5" height="2.5"/><rect x="7.9" y="26.0" width="2.5" height="2.5"/><rect x="14.6" y="26.6" width="2.5" height="2.5"/><rect x="20.8" y="31.6" width="2.5" height="2.5"/><rect x="19.3" y="11.4" width="2.5" height="2.5"/><rect x="12.9" y="16.6" width="2.5" height="2.5"/><rect x="72.4" y="1.7" width="2.5" height="2.5"/><rect x="44.3" y="15.2" width="2.5" height="2.5"/><rect x="48.3" y="12.9" width="2.5" height="2.5"/><rect x="52.0" y="12.1" width="2.5" height="2.5"/><rect x="55.1" y="11.4" width="2.5" height="2.5"/><rect x="61.4" y="10.4" width="2.5" height="2.5"/><rect x="63.4" y="13.5" width="2.5" height="2.5"/><rect x="47.8" y="17.7" width="2.5" height="2.5"/><rect x="51.0" y="18.7" width="2.5" height="2.5"/><rect x="53.0" y="19.8" width="2.5" height="2.5"/><rect x="56.2" y="18.3" width="2.5" height="2.5"/><rect x="59.3" y="16.6" width="2.5" height="2.5"/><rect x="60.3" y="19.8" width="2.5" height="2.5"/><rect x="62.4" y="21.8" width="2.5" height="2.5"/><rect x="49.9" y="22.9" width="2.5" height="2.5"/><rect x="54.1" y="23.9" width="2.5" height="2.5"/><rect x="57.2" y="26.0" width="2.5" height="2.5"/><rect x="52.4" y="21.4" width="2.5" height="2.5"/><rect x="55.3" y="14.1" width="2.5" height="2.5"/><rect x="20.4" y="48.3" width="2.5" height="2.5"/><rect x="7.3" y="55.5" width="2.5" height="2.5"/><rect x="16.6" y="54.1" width="2.5" height="2.5"/><rect x="18.7" y="56.2" width="2.5" height="2.5"/><rect x="20.8" y="54.1" width="2.5" height="2.5"/><rect x="22.9" y="56.2" width="2.5" height="2.5"/><rect x="28.1" y="53.0" width="2.5" height="2.5"/><rect x="15.6" y="60.3" width="2.5" height="2.5"/><rect x="23.3" y="60.3" width="2.5" height="2.5"/><rect x="2.7" y="59.9" width="2.5" height="2.5"/><rect x="10.0" y="64.9" width="2.5" height="2.5"/><rect x="20.8" y="66.6" width="2.5" height="2.5"/><rect x="26.6" y="65.5" width="2.5" height="2.5"/><rect x="28.1" y="65.5" width="2.5" height="2.5"/><rect x="25.4" y="71.8" width="2.5" height="2.5"/><rect x="18.3" y="53.0" width="2.5" height="2.5"/><rect x="17.0" y="57.2" width="2.5" height="2.5"/><rect x="60.3" y="48.9" width="2.5" height="2.5"/><rect x="62.4" y="48.9" width="2.5" height="2.5"/><rect x="58.2" y="52.0" width="2.5" height="2.5"/><rect x="61.4" y="55.1" width="2.5" height="2.5"/><rect x="64.5" y="54.1" width="2.5" height="2.5"/><rect x="55.1" y="55.1" width="2.5" height="2.5"/><rect x="53.0" y="57.2" width="2.5" height="2.5"/><rect x="58.2" y="58.2" width="2.5" height="2.5"/><rect x="60.3" y="58.2" width="2.5" height="2.5"/><rect x="52.0" y="62.4" width="2.5" height="2.5"/><rect x="62.4" y="61.4" width="2.5" height="2.5"/><rect x="62.4" y="64.5" width="2.5" height="2.5"/><rect x="68.6" y="66.1" width="2.5" height="2.5"/><rect x="59.3" y="53.0" width="2.5" height="2.5"/><rect x="56.2" y="56.2" width="2.5" height="2.5"/></g>
  </svg>
  <!-- controls -->
  <div class="a led" style="left:8.8px;top:364.6px"></div>
  <div class="a lbl" style="left:26px;top:366px">Volume</div>
  <div class="a led" style="left:60.8px;top:364.6px"></div>
  <div class="a lbl" style="left:78px;top:366px">Signal</div>
  <div class="a led" style="left:112.8px;top:364.6px"></div>
  <div class="a lbl" style="left:130px;top:366px">Data</div>
  <div class="a sep" style="left:170px;top:362px;height:18px"></div>
  <div class="a lbl" style="left:175px;top:366px">Speed</div>
  <div class="a combo" style="left:203px;top:364px;width:56px"><div class="a ctext">600 bps</div><div class="a arr" style="left:42px;top:2.5px"></div></div>
  <div class="a lbl" style="left:263px;top:366px">Locking</div>
  <div class="a combo" style="left:301px;top:364px;width:52px"><div class="a ctext">900 Hz</div><div class="a arr" style="left:38px;top:2.5px"></div></div>
  <div class="a combo" style="left:357px;top:364px;width:51px"><div class="a ctext">AFC on</div><div class="a arr" style="left:37px;top:2.5px"></div></div>
  <div class="a lbl" style="left:412px;top:366px">Display</div>
  <div class="a combo" style="left:451px;top:364px;width:81px"><div class="a ctext">Constellation</div><div class="a arr" style="left:67px;top:2.5px"></div></div>
  <!-- status bar -->
  <div class="a sep" style="left:398px;top:389px;height:9px"></div>
  <div class="a st" style="left:406.5px;top:388px">Freq: 1583.52Hz</div>
  <div class="a sep" style="left:474px;top:389px;height:9px"></div>
  <div class="a st" style="left:479px;top:388px">EbNo: 08dB</div>
  <div class="a sep" style="left:526px;top:389px;height:9px"></div>
 </div>
</div>
</body></html>
